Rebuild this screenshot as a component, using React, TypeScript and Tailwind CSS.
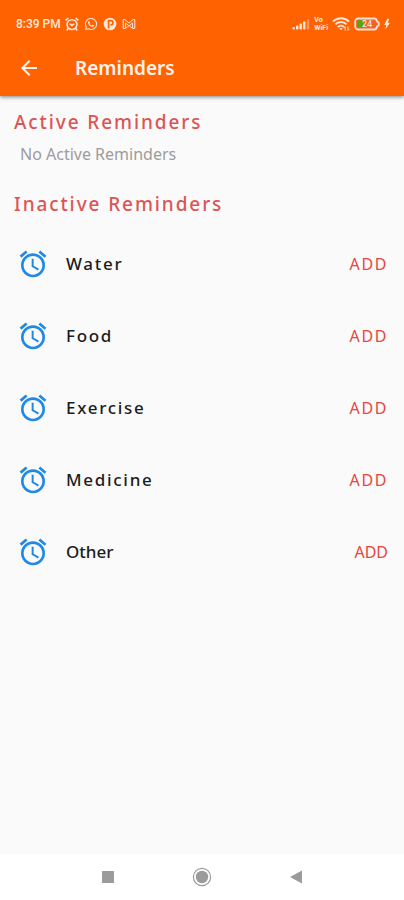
import { MdAccessAlarm, MdArrowBack } from "react-icons/md"
import { FaWhatsapp } from "react-icons/fa"

interface Reminder {
  name: string
  spaced: boolean
}

const inactiveReminders: Reminder[] = [
  { name: "Water", spaced: true },
  { name: "Food", spaced: true },
  { name: "Exercise", spaced: true },
  { name: "Medicine", spaced: true },
  { name: "Other", spaced: false },
]

function AlarmIcon() {
  return (
    <svg viewBox="0 0 14 14" className="size-3.5" fill="none" stroke="currentColor" strokeWidth="1.6">
      <circle cx="7" cy="7.6" r="4.9" />
      <path d="M0.6 3.4 3.4 1M13.4 3.4 10.6 1M3.2 11.6l-1.5 1.8M10.8 11.6l1.5 1.8" />
      <path d="M4.7 6.7 7 8.6l2.3-1.9" strokeWidth="1.4" />
    </svg>
  )
}

function ParkingIcon() {
  return (
    <svg viewBox="0 0 14 14" className="size-3.5">
      <circle cx="7" cy="7" r="6.3" fill="currentColor" />
      <path d="M5.6 11.6V3.6h2.2a2.1 2.1 0 0 1 0 4.2H7.4" fill="none" stroke="#ff6200" strokeWidth="1.7" />
    </svg>
  )
}

function MailIcon() {
  return (
    <svg viewBox="0 0 14 14" className="size-3.5" fill="none" stroke="currentColor">
      <path d="M1.2 2.6v8.8h2.2V6L7 8.8 10.6 6v5.4h2.2V2.6h-1.6L7 6 2.8 2.6Z" strokeWidth="1" />
      <path d="M3.8 11.2 7 8.6l3.2 2.6" strokeWidth="1" />
    </svg>
  )
}

function SignalIcon() {
  return (
    <svg viewBox="0 0 18 12" className="h-3 w-[18px]" fill="currentColor">
      <rect x="0.5" y="9" width="2.4" height="2.5" rx="0.8" />
      <rect x="4" y="7.5" width="2.4" height="4" rx="0.8" />
      <rect x="7.5" y="5.5" width="2.4" height="6" rx="0.8" />
      <rect x="11" y="3.5" width="2.4" height="8" rx="0.8" />
      <rect x="14.8" y="1" width="2.4" height="10.5" rx="0.8" opacity="0.4" />
    </svg>
  )
}

function WifiIcon() {
  return (
    <svg viewBox="0 0 18 14" className="h-3.5 w-[18px]" fill="none" stroke="currentColor" strokeWidth="2">
      <path d="M1 4.6a11.5 11.5 0 0 1 16 0" />
      <path d="M3.4 7.4a8 8 0 0 1 11.2 0" />
      <path d="M5.9 10a4.5 4.5 0 0 1 6.2 0" />
      <path d="M7.2 11.2h3.6L9 13.3Z" fill="currentColor" stroke="none" />
      <path d="M13.2 13.5V9.8M11.9 11l1.3-1.3M16 9.6v3.8M17.3 12.1 16 13.4" strokeWidth="1" />
    </svg>
  )
}

function BatteryIcon() {
  return (
    <svg viewBox="0 0 26 14" className="h-3.5 w-[26px]">
      <path
        d="M4 1.5h16.5c1.5 0 2.2 1.2 2.5 3l1.7 1.1v2.8L23 9.5c-.3 1.8-1 3-2.5 3H4A2.8 2.8 0 0 1 1.2 9.7V4.3A2.8 2.8 0 0 1 4 1.5Z"
        fill="#f5602a"
        stroke="#ffe0cf"
        strokeWidth="1.8"
      />
      <path d="M4.5 3.3H9v7.4H4.5A1.5 1.5 0 0 1 3 9.2V4.8a1.5 1.5 0 0 1 1.5-1.5Z" fill="#55a80c" />
      <text
        x="13"
        y="10"
        textAnchor="middle"
        fontSize="9"
        fontWeight="500"
        fill="#ffe0cf"
        fontFamily="Roboto, sans-serif"
      >
        24
      </text>
    </svg>
  )
}

function BoltIcon() {
  return (
    <svg viewBox="0 0 6 12" className="h-3 w-1.5" fill="currentColor">
      <path d="M3.4 0.8 0.2 7h2L1.4 11.2 5.9 5H3.9L5.2 0.8Z" />
    </svg>
  )
}

function StatusBar() {
  return (
    <div className="flex h-12 items-center justify-between pr-3.5 pl-4 text-[#ffe9dd]">
      <div className="flex items-center gap-1">
        <span className="font-[Roboto,sans-serif] text-xs font-medium">8:39 PM</span>
        <div className="flex items-center gap-[5px]">
          <AlarmIcon />
          <FaWhatsapp className="size-3.5" />
          <ParkingIcon />
          <MailIcon />
        </div>
      </div>
      <div className="flex items-center gap-1">
        <SignalIcon />
        <div className="font-[Roboto,sans-serif] text-[7px] leading-[8px] font-bold">
          <div>Vo</div>
          <div>WiFi</div>
        </div>
        <WifiIcon />
        <BatteryIcon />
        <BoltIcon />
      </div>
    </div>
  )
}

function ReminderRow({ reminder }: { reminder: Reminder }) {
  const tracking = reminder.spaced ? "tracking-widest" : ""

  return (
    <li className="flex h-[72px] items-center pr-4 pl-[17px]">
      <MdAccessAlarm className="size-8 text-[#2089e8]" />
      <span className={`ml-[17px] flex-1 text-[17px] font-medium text-[#1c1c1c] ${tracking}`}>{reminder.name}</span>
      <button type="button" aria-label={`Add ${reminder.name}`} className={`text-base text-[#e8453f] ${tracking}`}>
        ADD
      </button>
    </li>
  )
}

export default function App() {
  return (
    <div className="flex min-h-screen flex-col bg-[#fafafa] font-['Noto_Sans',sans-serif]">
      <header className="bg-[#ff6200] shadow-[0_1px_4px_rgba(0,0,0,0.5)]">
        <StatusBar />
        <div className="flex h-12 items-start pl-[17px] text-[#fff3ec]">
          <button type="button" aria-label="Back" className="mt-2">
            <MdArrowBack className="size-6" />
          </button>
          <h1 className="ml-[34px] pt-1.5 text-[19px] leading-7 font-semibold">Reminders</h1>
        </div>
      </header>

      <main className="flex-1 pt-3">
        <h2 className="pl-3.5 text-[19px] leading-7 font-medium tracking-widest text-[#dc5554]">Active Reminders</h2>
        <p className="mt-1.5 pl-5 text-base leading-6 text-[#9c9c9c]">No Active Reminders</p>
        <h2 className="mt-6 pl-3.5 text-[19px] leading-7 font-medium tracking-widest text-[#dc5554]">
          Inactive Reminders
        </h2>
        <ul className="mt-2.5">
          {inactiveReminders.map((reminder) => (
            <ReminderRow key={reminder.name} reminder={reminder} />
          ))}
        </ul>
      </main>

      <nav className="flex h-[46px] items-center justify-center gap-[77px] bg-white text-[#9b9b9b]">
        <button type="button" aria-label="Recent apps">
          <svg viewBox="0 0 14 14" className="size-3.5" fill="currentColor">
            <rect x="1" y="1" width="12" height="12" rx="0.5" />
          </svg>
        </button>
        <button type="button" aria-label="Home">
          <svg viewBox="0 0 20 20" className="size-5">
            <circle cx="10" cy="10" r="8.6" fill="none" stroke="currentColor" strokeWidth="1.2" />
            <circle cx="10" cy="10" r="6.2" fill="currentColor" />
          </svg>
        </button>
        <button type="button" aria-label="Back to previous screen">
          <svg viewBox="0 0 14 14" className="size-3.5" fill="currentColor">
            <path d="M13 0.5v13L1 7Z" />
          </svg>
        </button>
      </nav>
    </div>
  )
}
